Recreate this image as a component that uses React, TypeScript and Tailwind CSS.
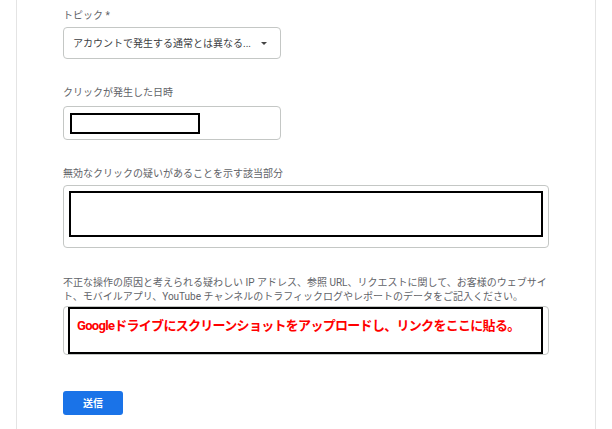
import React from "react";

const font = { fontFamily: "Roboto, 'Noto Sans CJK JP', sans-serif" };

function Label({ children, className = "" }: { children: React.ReactNode; className?: string }) {
  return <div className={`text-[10px] leading-[14px] text-[#5f6368] whitespace-nowrap ${className}`}>{children}</div>;
}

export default function App() {
  return (
    <div className="h-[429px] w-[612px] overflow-hidden bg-white" style={font}>
      <div className="ml-[16px] h-full w-[580px] border-x border-[#e4e4e4] pl-[46px] pt-[9px]">
        {/* トピック */}
        <Label>トピック *</Label>
        <div className="mt-[4px] flex h-[32px] w-[218px] items-center justify-between rounded-[4px] border border-[#c4c7c5] pl-[9px] pr-[13px]">
          <span className="text-[10px] text-[#3c4043] whitespace-nowrap">アカウントで発生する通常とは異なる...</span>
          <span className="h-0 w-0 border-x-[3px] border-t-[3px] border-x-transparent border-t-[#444]" />
        </div>

        {/* 日時 */}
        <Label className="mt-[27px]">クリックが発生した日時</Label>
        <div className="mt-[6px] h-[34px] w-[218px] rounded-[4px] border border-[#c4c7c5] pl-[6px] pt-[6px]">
          <div className="h-[21px] w-[130px] border-2 border-black" />
        </div>

        {/* 該当部分 */}
        <Label className="mt-[27px]">無効なクリックの疑いがあることを示す該当部分</Label>
        <div className="mt-[4px] h-[63px] w-[486px] rounded-[4px] border border-[#c4c7c5] pl-[5px] pt-[5px]">
          <div className="h-[46px] w-[474px] border-2 border-black" />
        </div>

        {/* ログ */}
        <Label className="mt-[28px]">
          不正な操作の原因と考えられる疑わしい IP アドレス、参照 URL、リクエストに関して、お客様のウェブサイ
          <br />
          ト、モバイルアプリ、YouTube チャンネルのトラフィックログやレポートのデータをご記入ください。
        </Label>
        <div className="mt-[2px] h-[49px] w-[486px] rounded-[4px] border border-[#c4c7c5] pl-[4px]">
          <div className="flex h-[47px] w-[475px] items-start border-2 border-black pl-[7px] pt-[8px]">
            <span className="text-[13px] leading-[18px] font-bold tracking-[-0.7px] text-[#ff0000] whitespace-nowrap">
              Googleドライブにスクリーンショットをアップロードし、リンクをここに貼る。
            </span>
          </div>
        </div>

        <button
          type="button"
          className="mt-[36px] flex h-[24px] w-[60px] items-center justify-center rounded-[3px] bg-[#1a73e8] text-[10px] font-bold text-white"
        >
          送信
        </button>
      </div>
    </div>
  );
}
